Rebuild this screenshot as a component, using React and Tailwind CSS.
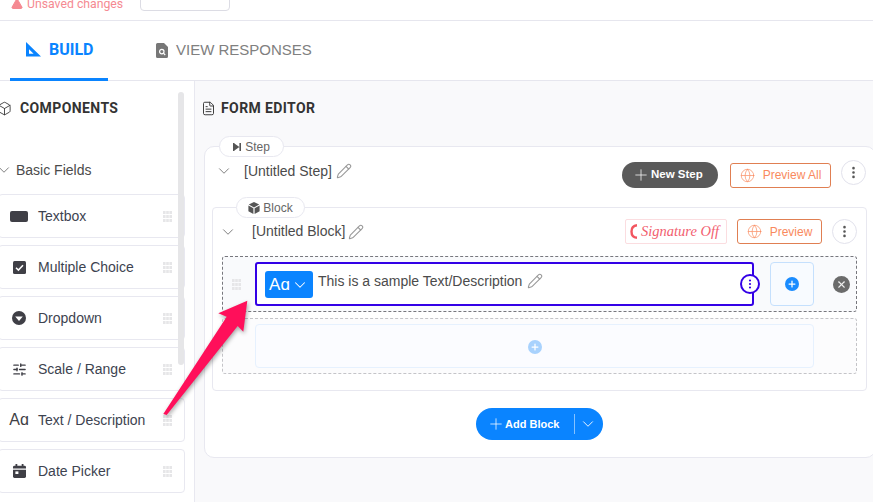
import React from 'react';
import { Box, ChevronDown, FileText, Globe, MoreVertical, Pencil, Plus, SlidersHorizontal, TriangleAlert, X } from 'lucide-react';

const GripDots = ({ className = '' }) => (
  <svg width="9" height="11" viewBox="0 0 9 11" className={className} fill="#e6e6e8">
    {[0, 4, 8].map(y => [0, 3.2, 6.4].map(x => <rect key={`${x}-${y}`} x={x} y={y} width="2.6" height="3" />))}
  </svg>
);

const TextboxIcon = () => (
  <svg width="18" height="11" viewBox="0 0 18 11"><rect width="18" height="11" rx="2" fill="#3f3f46" /></svg>
);

const CheckIcon = () => (
  <svg width="13" height="13" viewBox="0 0 13 13">
    <rect width="13" height="13" rx="1.5" fill="#3f3f46" />
    <path d="M3 6.8l2.4 2.3L10 4.2" fill="none" stroke="#fff" strokeWidth="1.5" />
  </svg>
);

const DropdownIcon = () => (
  <svg width="14" height="14" viewBox="0 0 14 14">
    <circle cx="7" cy="7" r="7" fill="#3f3f46" />
    <path d="M3.2 5.5h7.6L7 10z" fill="#fff" />
  </svg>
);

const CalendarIcon = () => (
  <svg width="13" height="14" viewBox="0 0 13 14" fill="#3f3f46">
    <rect x="2.5" width="1.8" height="3" />
    <rect x="8.7" width="1.8" height="3" />
    <path d="M0 3.2a1.4 1.4 0 0 1 1.4-1.4h10.2A1.4 1.4 0 0 1 13 3.2V4.6H0z" />
    <path d="M0 5.8h13v6.8a1.4 1.4 0 0 1-1.4 1.4H1.4A1.4 1.4 0 0 1 0 12.6z" />
    <rect x="2.4" y="7.4" width="3" height="2.6" fill="#fff" />
  </svg>
);

const fields = [
  { label: 'Textbox', icon: <TextboxIcon /> },
  { label: 'Multiple Choice', icon: <CheckIcon /> },
  { label: 'Dropdown', icon: <DropdownIcon /> },
  { label: 'Scale / Range', icon: <SlidersHorizontal size={15} strokeWidth={2.2} color="#3f3f46" /> },
  { label: 'Text / Description', icon: <span className="text-[16px] leading-none text-[#3f3f46]">Aɑ</span> },
  { label: 'Date Picker', icon: <CalendarIcon /> },
];

const KebabButton = () => (
  <button className="w-[25px] h-[25px] shrink-0 rounded-full bg-white border border-[#e2e2ec] flex items-center justify-center">
    <MoreVertical size={15} color="#555" strokeWidth={2.2} />
  </button>
);

const PreviewButton = ({ label, width }) => (
  <button className={`${width} h-[25px] shrink-0 rounded-[3px] bg-white border border-[#e07f52] flex items-center justify-center gap-[8px] text-[12px] text-[#f98a5e]`}>
    <Globe size={15} strokeWidth={1.1} />
    {label}
  </button>
);

const EditPencil = () => <Pencil size={16} strokeWidth={1.6} color="#999" />;

const Sidebar = () => (
  <aside className="w-[195px] shrink-0 border-r border-[#e8e8f0] bg-white relative overflow-hidden">
    <div className="absolute left-[178px] top-[11px] w-[6px] h-[273px] rounded-full bg-[#e6e6e8]" />
    <div className="flex items-center gap-[8px] h-[54px] -ml-[3px] font-['Roboto',sans-serif] text-[14px] font-bold tracking-[0.4px] text-[#333]">
      <Box size={15} strokeWidth={1.4} color="#333" />
      COMPONENTS
    </div>
    <div className="flex items-center h-[32px] mt-[19px] -ml-[5px] text-[14px] text-[#4b4b4b]">
      <ChevronDown size={18} strokeWidth={1} color="#555" />
      <span className="ml-[3px]">Basic Fields</span>
    </div>
    <div className="flex flex-col gap-[7px] mt-[8px] w-[187px] -ml-[2px]">
      {fields.map(field => (
        <div key={field.label} className="h-[44px] pl-[11px] pr-[12px] flex items-center rounded-[4px] border border-[#e8e8f0] bg-white/60">
          <div className="w-[18px] flex justify-center">{field.icon}</div>
          <span className="ml-[10px] flex-1 text-[14px] text-[#3d4350]">{field.label}</span>
          <GripDots />
        </div>
      ))}
    </div>
  </aside>
);

const BlockRow = () => (
  <div className="flex flex-col gap-[6px] ml-[9px] mr-[9px]">
    <div className="h-[56px] rounded-[3px] border border-dashed border-[#77777d] bg-[#f9fafc] pl-[9px] flex items-center">
      <GripDots className="mr-[14px]" />
      <div className="relative w-[499px] h-[44px] rounded-[3px] border-2 border-[#3300e6] bg-white flex pl-[8px] pt-[7px]">
        <div className="w-[48px] h-[27px] rounded-[3px] bg-[#0a84ff] text-white flex items-center justify-center gap-[1px]">
          <span className="text-[17px] leading-none">Aɑ</span>
          <ChevronDown size={18} strokeWidth={1.4} />
        </div>
        <span className="ml-[5px] -mt-[2px] text-[14px] leading-[24px] text-[#4b4b4b]">This is a sample Text/Description</span>
        <span className="ml-[5px] mt-[2px]"><EditPencil /></span>
        <div className="absolute -right-[8px] top-[10px] w-[20px] h-[20px] rounded-full bg-white border-2 border-[#3300e6] flex items-center justify-center">
          <MoreVertical size={12} color="#3300e6" strokeWidth={2.4} />
        </div>
      </div>
      <div className="ml-[16px] w-[44px] h-[44px] rounded-[4px] border border-[#c5e0fd] bg-[#f8fbff] flex items-center justify-center">
        <div className="w-[14px] h-[14px] rounded-full bg-[#1a8cff] flex items-center justify-center">
          <Plus size={10} color="#fff" strokeWidth={3} />
        </div>
      </div>
      <div className="ml-[19px] w-[17px] h-[17px] rounded-full bg-[#6b6b6b] flex items-center justify-center">
        <X size={11} color="#eee" strokeWidth={2.4} />
      </div>
    </div>
    <div className="h-[56px] rounded-[3px] border border-dashed border-[#c4c4c8] bg-[#fcfcfd] pl-[32px] flex items-center">
      <div className="w-[559px] h-[44px] rounded-[4px] border border-[#e6f1fe] bg-[#fbfcff] flex items-center justify-center">
        <div className="w-[14px] h-[14px] mt-[2px] rounded-full bg-[#a8d2fd] flex items-center justify-center">
          <Plus size={10} color="#fff" strokeWidth={3} />
        </div>
      </div>
    </div>
  </div>
);

const App = () => (
  <div className="relative w-[873px] h-[502px] overflow-hidden bg-white font-['Liberation_Sans',Arial,sans-serif]">
    <header className="h-[21px] border-b border-[#e6e6ee] flex items-end pb-[9px] pl-[11px] overflow-hidden">
      <div className="flex items-center gap-[4px] text-[12.25px] leading-[14px] text-[#f58a92] font-['Roboto',sans-serif]">
        <TriangleAlert size={12} fill="#f58a92" color="#f58a92" />
        Unsaved changes
      </div>
      <div className="ml-[17px] w-[90px] h-[30px] shrink-0 rounded-[4px] border border-[#dcdce4] bg-white" />
    </header>

    <nav className="h-[60px] border-b border-[#e6e6ee] flex pl-[10px]">
      <div className="w-[98px] h-[60px] border-b-[3px] border-[#0a84ff] flex items-center pl-[16px] gap-[8px] text-[16px] font-bold text-[#0a84ff] font-['Roboto',sans-serif]">
        <svg width="15" height="15" viewBox="0 0 15 15" fill="#0a84ff">
          <path fillRule="evenodd" d="M0 0l15 14.5H0zM3 7.2v4.5h4.6z" />
        </svg>
        BUILD
      </div>
      <div className="ml-[48px] flex items-center gap-[8px] text-[15px] text-[#808080]">
        <svg width="12" height="15" viewBox="0 0 12 15">
          <path d="M1.5 0H8l4 4v9.5a1.5 1.5 0 0 1-1.5 1.5h-9A1.5 1.5 0 0 1 0 13.5v-12A1.5 1.5 0 0 1 1.5 0z" fill="#777" />
          <circle cx="5.8" cy="8.6" r="2.2" fill="none" stroke="#fff" strokeWidth="1.2" />
          <path d="M7.4 10.2l1.8 1.8" stroke="#fff" strokeWidth="1.2" />
        </svg>
        VIEW RESPONSES
      </div>
    </nav>

    <main className="flex h-[421px]">
      <Sidebar />
      <section className="flex-1 min-w-0 bg-[#f9f9fb] pl-[9px]">
        <div className="flex items-center gap-[5px] h-[54px] -ml-[3px] font-['Roboto',sans-serif] text-[14px] font-bold tracking-[0.4px] text-[#333]">
          <FileText size={15} strokeWidth={1.5} color="#333" />
          FORM EDITOR
        </div>

        <div className="relative mt-[11px] w-[672px] h-[312px] rounded-[10px] border border-[#e8e8f0] bg-white">
          <div className="absolute left-[14px] -top-[11px] h-[21px] w-[65px] rounded-full border border-[#e8e8f0] bg-white flex items-center justify-center gap-[4px] text-[12px] text-[#666]">
            <svg width="8" height="8" viewBox="0 0 8 8" fill="#555"><path d="M0 0h1.4v8H0zM1.4 0.6L6.4 4l-5 3.4zM6.4 0H8v8H6.4z" /></svg>
            Step
          </div>
          <div className="h-[60px] flex items-center pl-[10px] pr-[9px] pb-[4px]">
            <ChevronDown size={18} strokeWidth={1} color="#555" className="-mt-[8px]" />
            <span className="ml-[11px] -mt-[8px] text-[14px] text-[#4b4b4b]">[Untitled Step]</span>
            <span className="ml-[4px] -mt-[8px]"><EditPencil /></span>
            <button className="ml-auto w-[96px] h-[26px] rounded-full bg-[#5a5a5a] text-white text-[11.5px] font-bold flex items-center pl-[10px]">
              <Plus size={18} strokeWidth={1} />
              <span className="ml-[1px]">New Step</span>
            </button>
            <div className="ml-[12px]"><PreviewButton label="Preview All" width="w-[101px]" /></div>
            <div className="ml-[10px] -mt-[5px]"><KebabButton /></div>
          </div>

          <div className="relative ml-[7px] w-[655px] h-[184px] rounded-[4px] border border-[#e8e8f0] bg-white">
            <div className="absolute left-[23px] -top-[11px] h-[21px] w-[69px] rounded-full border border-[#e8e8f0] bg-white flex items-center justify-center gap-[3px] text-[12px] text-[#666]">
              <svg width="12" height="12" viewBox="0 0 12 12" fill="#555"><path d="M6 0l5.2 2.6L6 5.4.8 2.6zM.4 3.6l5 2.7V12L.4 9.2zM11.6 3.6v5.6L6.6 12V6.3z" /></svg>
              Block
            </div>
            <div className="h-[48px] flex items-center pl-[6px] pr-[9px] pb-[1px]">
              <ChevronDown size={18} strokeWidth={1} color="#555" />
              <span className="ml-[15px] text-[14px] text-[#4b4b4b]">[Untitled Block]</span>
              <span className="ml-[3px]"><EditPencil /></span>
              <div className="ml-auto w-[102px] h-[25px] rounded-[2px] border border-[#fbdde0] flex items-center pl-[4px] gap-[3px] font-['Liberation_Serif',serif] italic text-[14.5px] text-[#f2606f] whitespace-nowrap">
                <svg width="8" height="15" viewBox="0 0 8 15" fill="none"><path d="M7 1.2C3.5 1.5 1.5 4 1.5 7.5S3.5 13.5 7 13.8" stroke="#f2555f" strokeWidth="2.4" /></svg>
                Signature Off
              </div>
              <div className="ml-[10px]"><PreviewButton label="Preview" width="w-[85px]" /></div>
              <div className="ml-[10px]"><KebabButton /></div>
            </div>
            <BlockRow />
          </div>

          <div className="mt-[17px] flex justify-center pr-[1px]">
            <div className="w-[127px] h-[32px] rounded-full bg-[#0a84ff] text-white flex items-center pl-[11px] text-[11px] font-bold">
              <Plus size={18} strokeWidth={1} />
              <span>Add Block</span>
              <span className="ml-[15px] w-px h-[20px] bg-white/50" />
              <ChevronDown size={18} strokeWidth={1.2} className="ml-[4px]" />
            </div>
          </div>
        </div>
      </section>
    </main>

    {/* annotation arrow over the page */}
    <svg className="absolute left-0 top-0 pointer-events-none drop-shadow-[1px_2px_2px_rgba(0,0,0,0.35)]" width="873" height="502" viewBox="0 0 873 502">
      <path d="M163.3 414L226.7 316.7L218.3 313.3L247.3 300.7L243.3 331.7L237.7 326L166.7 415Z" fill="#ff0f5a" />
    </svg>
  </div>
);

export default App;
